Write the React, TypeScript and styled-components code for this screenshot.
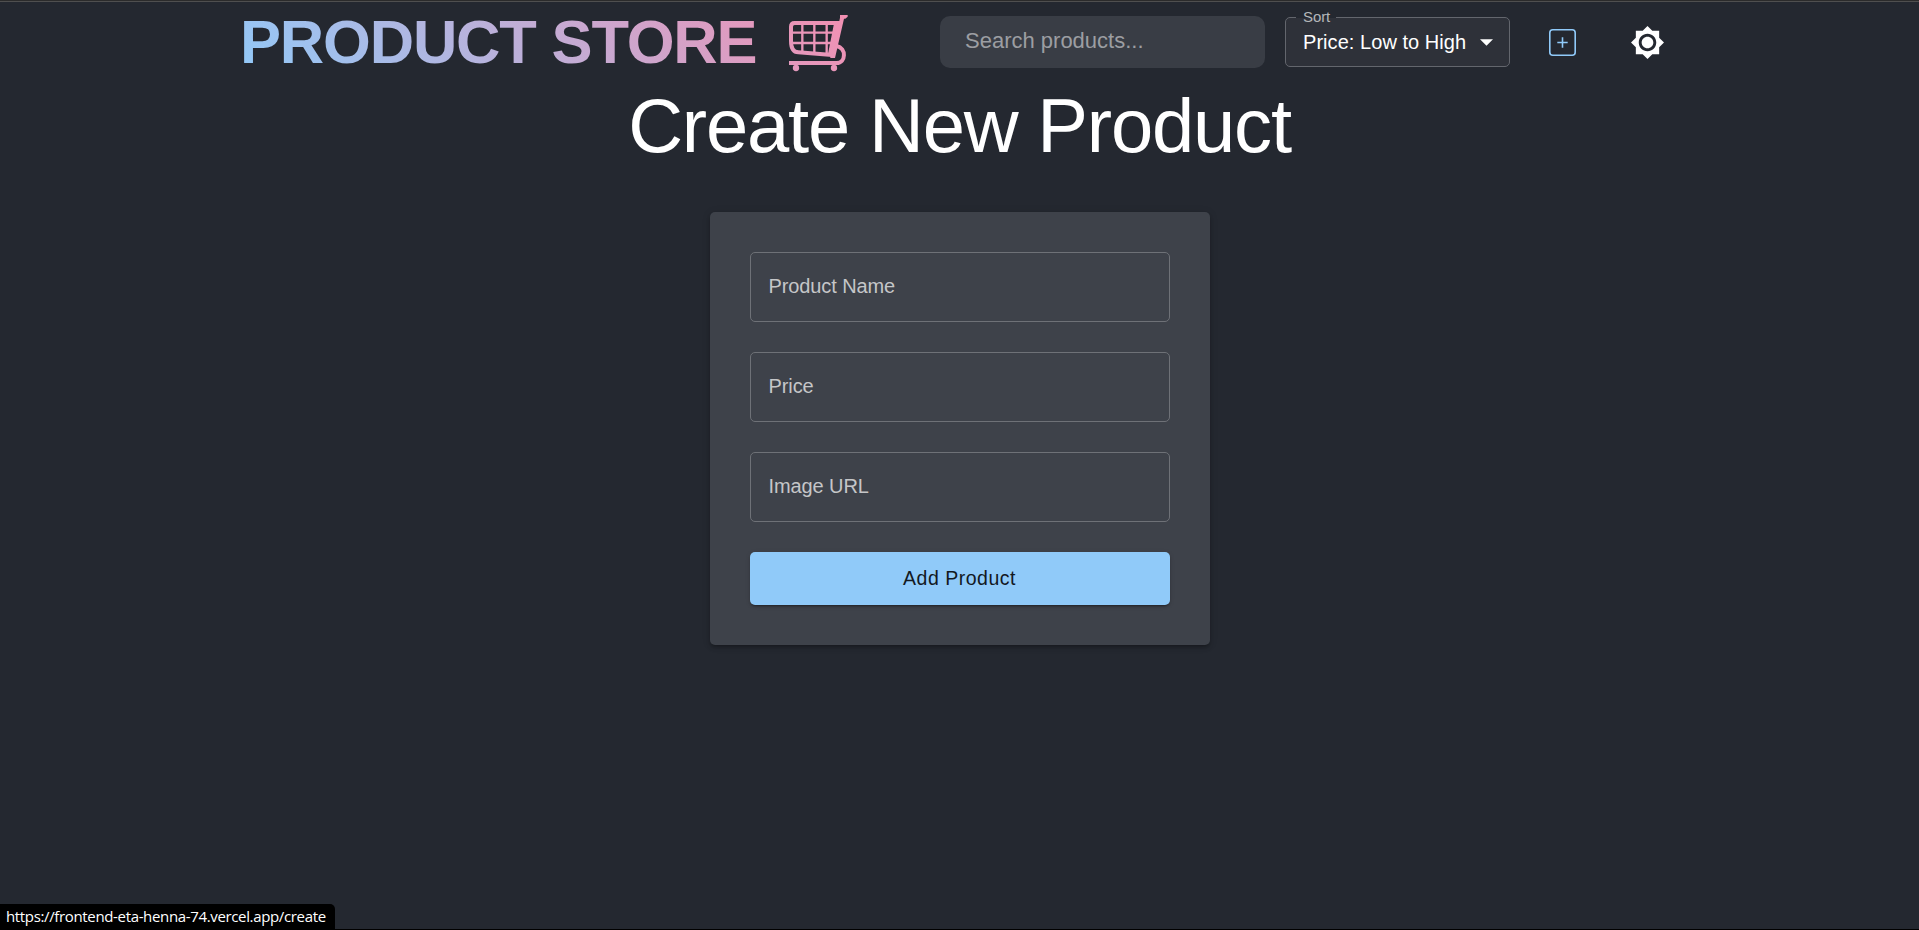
import React from 'react';
import styled, { createGlobalStyle } from 'styled-components';

const sans = '"Liberation Sans", Arial, sans-serif';

const GlobalStyle = createGlobalStyle`
  *, *::before, *::after { box-sizing: border-box; }
  body { margin: 0; background: #242830; color: #fff; font-family: ${sans}; overflow: hidden; }
`;

const Page = styled.div`
  display: flex;
  flex-direction: column;
  align-items: center;
  height: 930px;
  border-top: 1px solid #2b2b2b;
  border-bottom: 1px solid #000;
`;

const Header = styled.header`
  display: flex;
  align-items: center;
  align-self: stretch;
  height: 81px;
  padding-left: 240px;
  border-top: 1px solid #4f4f4f;
`;

const Brand = styled.a`
  display: flex;
  align-items: flex-start;
  width: 616px;
  height: 80px;
`;

const BrandText = styled.span`
  width: 540px;
  height: 80px;
  font-size: 61.5px;
  line-height: 80px;
  font-weight: 700;
  letter-spacing: -1.2px;
  white-space: nowrap;
  color: transparent;
  background: linear-gradient(45deg, #90caf9, #f48fb1) 0 0 / 612px 80px no-repeat;
  background-clip: text;
`;

const CartSvg = styled.svg`
  display: block;
  flex: none;
  margin-top: 6px;
`;

const Search = styled.input`
  width: 325px;
  height: 52px;
  margin-left: 84px;
  padding: 0 25px 2px;
  border: 0;
  border-radius: 10px;
  outline: 0;
  background: #393d45;
  color: #fff;
  font: 22px ${sans};
  &::placeholder { color: #9c9ea2; opacity: 1; }
`;

const SortField = styled.div`
  position: relative;
  display: flex;
  align-items: center;
  justify-content: space-between;
  width: 225px;
  height: 50px;
  margin-left: 20px;
  padding: 0 16px 0 17px;
  border: 1px solid #63666d;
  border-radius: 5px;
  background: #2e3139;
  font-size: 20px;
  line-height: 50px;
  letter-spacing: 0.05px;
  white-space: nowrap;
`;

const SortLabel = styled.span`
  position: absolute;
  left: 10px;
  top: -9px;
  height: 16px;
  padding: 0 6px 0 7px;
  font-size: 15px;
  line-height: 16px;
  letter-spacing: -0.1px;
  color: #b4b6b9;
  background: linear-gradient(#242830 9px, #2e3139 9px);
`;

const IconButton = styled.button<{ $gap: number; $size: number }>`
  display: flex;
  align-items: center;
  justify-content: center;
  width: ${(p) => p.$size}px;
  height: ${(p) => p.$size}px;
  margin: 1px 0 0 ${(p) => p.$gap}px;
  padding: 0;
  border: 0;
  background: none;
`;

const Heading = styled.h1`
  margin: 0 0 44px;
  padding-top: 1px;
  font-size: 76px;
  line-height: 85px;
  font-weight: 400;
  letter-spacing: -1.2px;
  text-align: center;
`;

const Card = styled.form`
  display: flex;
  flex-direction: column;
  gap: 30px;
  width: 500px;
  padding: 40px;
  border-radius: 5px;
  background: #3e424a;
  box-shadow: 0 3px 3px -2px rgba(0, 0, 0, 0.2), 0 3px 4px rgba(0, 0, 0, 0.14), 0 1px 8px rgba(0, 0, 0, 0.12);
`;

const Field = styled.input`
  height: 70px;
  padding: 0 18px 2px;
  border: 1px solid #6e7177;
  border-radius: 5px;
  outline: 0;
  background: transparent;
  color: #fff;
  font: 20px ${sans};
  letter-spacing: -0.1px;
  &::placeholder { color: #c5c6c8; opacity: 1; }
`;

const Submit = styled.button`
  height: 53px;
  padding: 0;
  border: 0;
  border-radius: 5px;
  background: #90caf9;
  color: #13191f;
  font: 19.5px ${sans};
  letter-spacing: 0.5px;
  box-shadow: 0 3px 1px -2px rgba(0, 0, 0, 0.2), 0 2px 2px rgba(0, 0, 0, 0.14), 0 1px 5px rgba(0, 0, 0, 0.12);
`;

const StatusBar = styled.div`
  position: fixed;
  left: 0;
  bottom: 0;
  width: 335px;
  height: 26px;
  padding-left: 6px;
  border-top-right-radius: 5px;
  background: #000;
  font-family: "Open Sans", "Noto Sans", sans-serif;
  font-size: 15px;
  line-height: 25px;
  letter-spacing: -0.35px;
  white-space: nowrap;
`;

function Cart() {
  return (
    <CartSvg width="76" height="70" viewBox="0 0 228 210" fill="none">
      <defs>
        <linearGradient id="cart" gradientUnits="userSpaceOnUse" x1="5" y1="215" x2="220" y2="0">
          <stop offset="0" stopColor="#e09bbf" />
          <stop offset="1" stopColor="#f48fb1" />
        </linearGradient>
      </defs>
      <g stroke="url(#cart)">
        <path d="M178 45H44q-11 0-11 11v42q0 34 22 35l102 8" strokeWidth="12" />
        <path d="M67 48v86M103 48v90M140 48v92M36 74h128M36 105h122" strokeWidth="7" />
        <path d="M172 134c28 -26 26 31-2 31H27" stroke="none" />
        <path d="M170 114c30 6 28 51 0 51H27" strokeWidth="12" />
      </g>
      <g fill="url(#cart)">
        <path d="M180 21h23v5l-7 6h-4L165 150h-14v-8l-7-4 17-86V39h17l2-10z" />
        <circle cx="48" cy="180" r="9.5" />
        <circle cx="162" cy="180" r="9.5" />
      </g>
    </CartSvg>
  );
}

export default function App() {
  return (
    <Page>
      <GlobalStyle />
      <Header>
        <Brand>
          <BrandText>PRODUCT STORE</BrandText>
          <Cart />
        </Brand>
        <Search placeholder="Search products..." />
        <SortField>
          <SortLabel>Sort</SortLabel>
          Price: Low to High
          <svg width="13" height="7" viewBox="0 0 13 7">
            <path d="M0 .3h13L6.5 6.8z" fill="#fff" />
          </svg>
        </SortField>
        <IconButton $gap={38} $size={29} aria-label="Add product">
          <svg width="29" height="29" viewBox="0 0 29 29" fill="none" stroke="#90caf9" strokeWidth="1.6">
            <rect x="1.8" y="1.8" width="25.4" height="25.4" rx="3" />
            <path d="M14.5 9.3v10.4M9.3 14.5h10.4" />
          </svg>
        </IconButton>
        <IconButton $gap={53} $size={35} aria-label="Toggle theme">
          <svg width="35" height="35" viewBox="0 0 24 24" fill="#fff">
            <path d="M20 8.69V4h-4.69L12 .69 8.69 4H4v4.69L.69 12 4 15.31V20h4.69L12 23.31 15.31 20H20v-4.69L23.31 12 20 8.69zM12 18c-3.31 0-6-2.69-6-6s2.69-6 6-6 6 2.69 6 6-2.69 6-6 6zm0-10c-2.21 0-4 1.79-4 4s1.79 4 4 4 4-1.79 4-4-1.79-4-4-4z" />
          </svg>
        </IconButton>
      </Header>
      <Heading>Create New Product</Heading>
      <Card>
        <Field placeholder="Product Name" />
        <Field placeholder="Price" />
        <Field placeholder="Image URL" />
        <Submit type="button">Add Product</Submit>
      </Card>
      <StatusBar>https://frontend-eta-henna-74.vercel.app/create</StatusBar>
    </Page>
  );
}
